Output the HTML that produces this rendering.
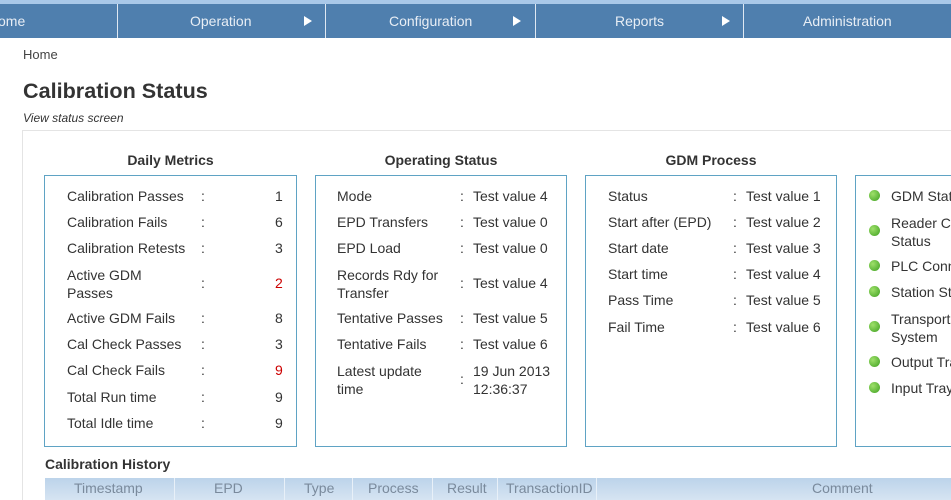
<!DOCTYPE html>
<html><head><meta charset="utf-8"><style>
*{margin:0;padding:0;box-sizing:border-box}
html,body{width:951px;height:500px;overflow:hidden}
body{background:#fff;font-family:"Liberation Sans",sans-serif;color:#333;position:relative}
#w{position:absolute;left:0;top:0;width:951px;height:500px;overflow:hidden}
.a{position:absolute;white-space:nowrap}
.nav{position:absolute;left:0;top:0;width:951px;height:38px;background:#4f7fae;border-top:4px solid #a9c8e8}
.nav .a{color:#e8eef5;font-size:14px;top:9px}
.sep{position:absolute;top:0;width:1px;height:34px;background:#dfe8f2}
.tri{position:absolute;top:12px;width:0;height:0;border-left:8px solid #fff;border-top:5px solid transparent;border-bottom:5px solid transparent}
.box{position:absolute;top:175px;width:253px;height:272px;border:1px solid #5fa3c4}
.h{position:absolute;top:152px;font-weight:bold;font-size:14px;color:#333;text-align:center}
.t{font-size:14px;color:#333}
.dot{position:absolute;width:11px;height:11px;border-radius:50%;background:radial-gradient(circle at 35% 35%,#9ee06a,#3ea020)}
</style></head><body><div id="w">
<div class="nav">
<span class="a" style="left:-2px">ome</span>
<div class="sep" style="left:117px"></div>
<span class="a" style="left:190px">Operation</span><div class="tri" style="left:304px"></div>
<div class="sep" style="left:325px"></div>
<span class="a" style="left:389px">Configuration</span><div class="tri" style="left:513px"></div>
<div class="sep" style="left:535px"></div>
<span class="a" style="left:615px">Reports</span><div class="tri" style="left:722px"></div>
<div class="sep" style="left:743px"></div>
<span class="a" style="left:803px">Administration</span>
</div>
<span class="a" style="left:23px;top:47px;font-size:13px;color:#444">Home</span>
<span class="a" style="left:23px;top:78px;font-size:21.6px;font-weight:bold;color:#333">Calibration Status</span>
<span class="a" style="left:23px;top:111px;font-size:12px;font-style:italic;color:#333">View status screen</span>
<div style="position:absolute;left:22px;top:130px;width:929px;height:380px;border:1px solid #e4e4e4;border-right:none"></div>

<div class="h" style="left:44px;width:253px">Daily Metrics</div>
<div class="h" style="left:315px;width:252px">Operating Status</div>
<div class="h" style="left:585px;width:252px">GDM Process</div>
<div class="box" style="left:44px"></div>
<div class="box" style="left:315px;width:252px"></div>
<div class="box" style="left:585px;width:252px"></div>
<div class="box" style="left:855px;width:96px;border-right:none"></div>

<div class="t">
<span class="a" style="left:67px;top:188px">Calibration Passes</span><span class="a" style="left:201px;top:188px">:</span><span class="a" style="left:275px;top:188px">1</span>
<span class="a" style="left:67px;top:214px">Calibration Fails</span><span class="a" style="left:201px;top:214px">:</span><span class="a" style="left:275px;top:214px">6</span>
<span class="a" style="left:67px;top:240px">Calibration Retests</span><span class="a" style="left:201px;top:240px">:</span><span class="a" style="left:275px;top:240px">3</span>
<span class="a" style="left:67px;top:266px;line-height:18px">Active GDM<br>Passes</span><span class="a" style="left:201px;top:275px">:</span><span class="a" style="left:275px;top:275px;color:#c00">2</span>
<span class="a" style="left:67px;top:310px">Active GDM Fails</span><span class="a" style="left:201px;top:310px">:</span><span class="a" style="left:275px;top:310px">8</span>
<span class="a" style="left:67px;top:336px">Cal Check Passes</span><span class="a" style="left:201px;top:336px">:</span><span class="a" style="left:275px;top:336px">3</span>
<span class="a" style="left:67px;top:362px">Cal Check Fails</span><span class="a" style="left:201px;top:362px">:</span><span class="a" style="left:275px;top:362px;color:#c00">9</span>
<span class="a" style="left:67px;top:389px">Total Run time</span><span class="a" style="left:201px;top:389px">:</span><span class="a" style="left:275px;top:389px">9</span>
<span class="a" style="left:67px;top:415px">Total Idle time</span><span class="a" style="left:201px;top:415px">:</span><span class="a" style="left:275px;top:415px">9</span>

<span class="a" style="left:337px;top:188px">Mode</span><span class="a" style="left:460px;top:188px">:</span><span class="a" style="left:473px;top:188px">Test value 4</span>
<span class="a" style="left:337px;top:214px">EPD Transfers</span><span class="a" style="left:460px;top:214px">:</span><span class="a" style="left:473px;top:214px">Test value 0</span>
<span class="a" style="left:337px;top:240px">EPD Load</span><span class="a" style="left:460px;top:240px">:</span><span class="a" style="left:473px;top:240px">Test value 0</span>
<span class="a" style="left:337px;top:266px;line-height:18px">Records Rdy for<br>Transfer</span><span class="a" style="left:460px;top:275px">:</span><span class="a" style="left:473px;top:275px">Test value 4</span>
<span class="a" style="left:337px;top:310px">Tentative Passes</span><span class="a" style="left:460px;top:310px">:</span><span class="a" style="left:473px;top:310px">Test value 5</span>
<span class="a" style="left:337px;top:336px">Tentative Fails</span><span class="a" style="left:460px;top:336px">:</span><span class="a" style="left:473px;top:336px">Test value 6</span>
<span class="a" style="left:337px;top:362px;line-height:18px">Latest update<br>time</span><span class="a" style="left:460px;top:371px">:</span><span class="a" style="left:473px;top:362px;line-height:18px">19 Jun 2013<br>12:36:37</span>

<span class="a" style="left:608px;top:188px">Status</span><span class="a" style="left:733px;top:188px">:</span><span class="a" style="left:746px;top:188px">Test value 1</span>
<span class="a" style="left:608px;top:214px">Start after (EPD)</span><span class="a" style="left:733px;top:214px">:</span><span class="a" style="left:746px;top:214px">Test value 2</span>
<span class="a" style="left:608px;top:240px">Start date</span><span class="a" style="left:733px;top:240px">:</span><span class="a" style="left:746px;top:240px">Test value 3</span>
<span class="a" style="left:608px;top:266px">Start time</span><span class="a" style="left:733px;top:266px">:</span><span class="a" style="left:746px;top:266px">Test value 4</span>
<span class="a" style="left:608px;top:292px">Pass Time</span><span class="a" style="left:733px;top:292px">:</span><span class="a" style="left:746px;top:292px">Test value 5</span>
<span class="a" style="left:608px;top:319px">Fail Time</span><span class="a" style="left:733px;top:319px">:</span><span class="a" style="left:746px;top:319px">Test value 6</span>

<div class="dot" style="left:869px;top:190px"></div><span class="a" style="left:891px;top:188px">GDM Status</span>
<div class="dot" style="left:869px;top:225px"></div><span class="a" style="left:891px;top:214px;line-height:18px">Reader Co<br>Status</span>
<div class="dot" style="left:869px;top:260px"></div><span class="a" style="left:891px;top:258px">PLC Conn</span>
<div class="dot" style="left:869px;top:286px"></div><span class="a" style="left:891px;top:284px">Station St</span>
<div class="dot" style="left:869px;top:321px"></div><span class="a" style="left:891px;top:310px;line-height:18px">Transport<br>System</span>
<div class="dot" style="left:869px;top:356px"></div><span class="a" style="left:891px;top:354px">Output Tra</span>
<div class="dot" style="left:869px;top:382px"></div><span class="a" style="left:891px;top:380px">Input Tray</span>
</div>

<span class="a" style="left:45px;top:456px;font-size:14px;font-weight:bold;color:#333">Calibration History</span>
<div style="position:absolute;left:45px;top:478px;width:906px;height:22px;background:linear-gradient(#bcd3ea,#d6e4f2)"></div>
<div style="font-size:14px;color:#7a8a9c">
<span class="a" style="left:74px;top:480px">Timestamp</span>
<span class="a" style="left:214px;top:480px">EPD</span>
<span class="a" style="left:304px;top:480px">Type</span>
<span class="a" style="left:368px;top:480px">Process</span>
<span class="a" style="left:447px;top:480px">Result</span>
<span class="a" style="left:506px;top:480px">TransactionID</span>
<span class="a" style="left:812px;top:480px">Comment</span>
</div>
<div style="position:absolute;top:478px;left:174px;width:1px;height:22px;background:#e8f0f8"></div>
<div style="position:absolute;top:478px;left:284px;width:1px;height:22px;background:#e8f0f8"></div>
<div style="position:absolute;top:478px;left:352px;width:1px;height:22px;background:#e8f0f8"></div>
<div style="position:absolute;top:478px;left:432px;width:1px;height:22px;background:#e8f0f8"></div>
<div style="position:absolute;top:478px;left:497px;width:1px;height:22px;background:#e8f0f8"></div>
<div style="position:absolute;top:478px;left:596px;width:1px;height:22px;background:#e8f0f8"></div>
</div></body></html>
